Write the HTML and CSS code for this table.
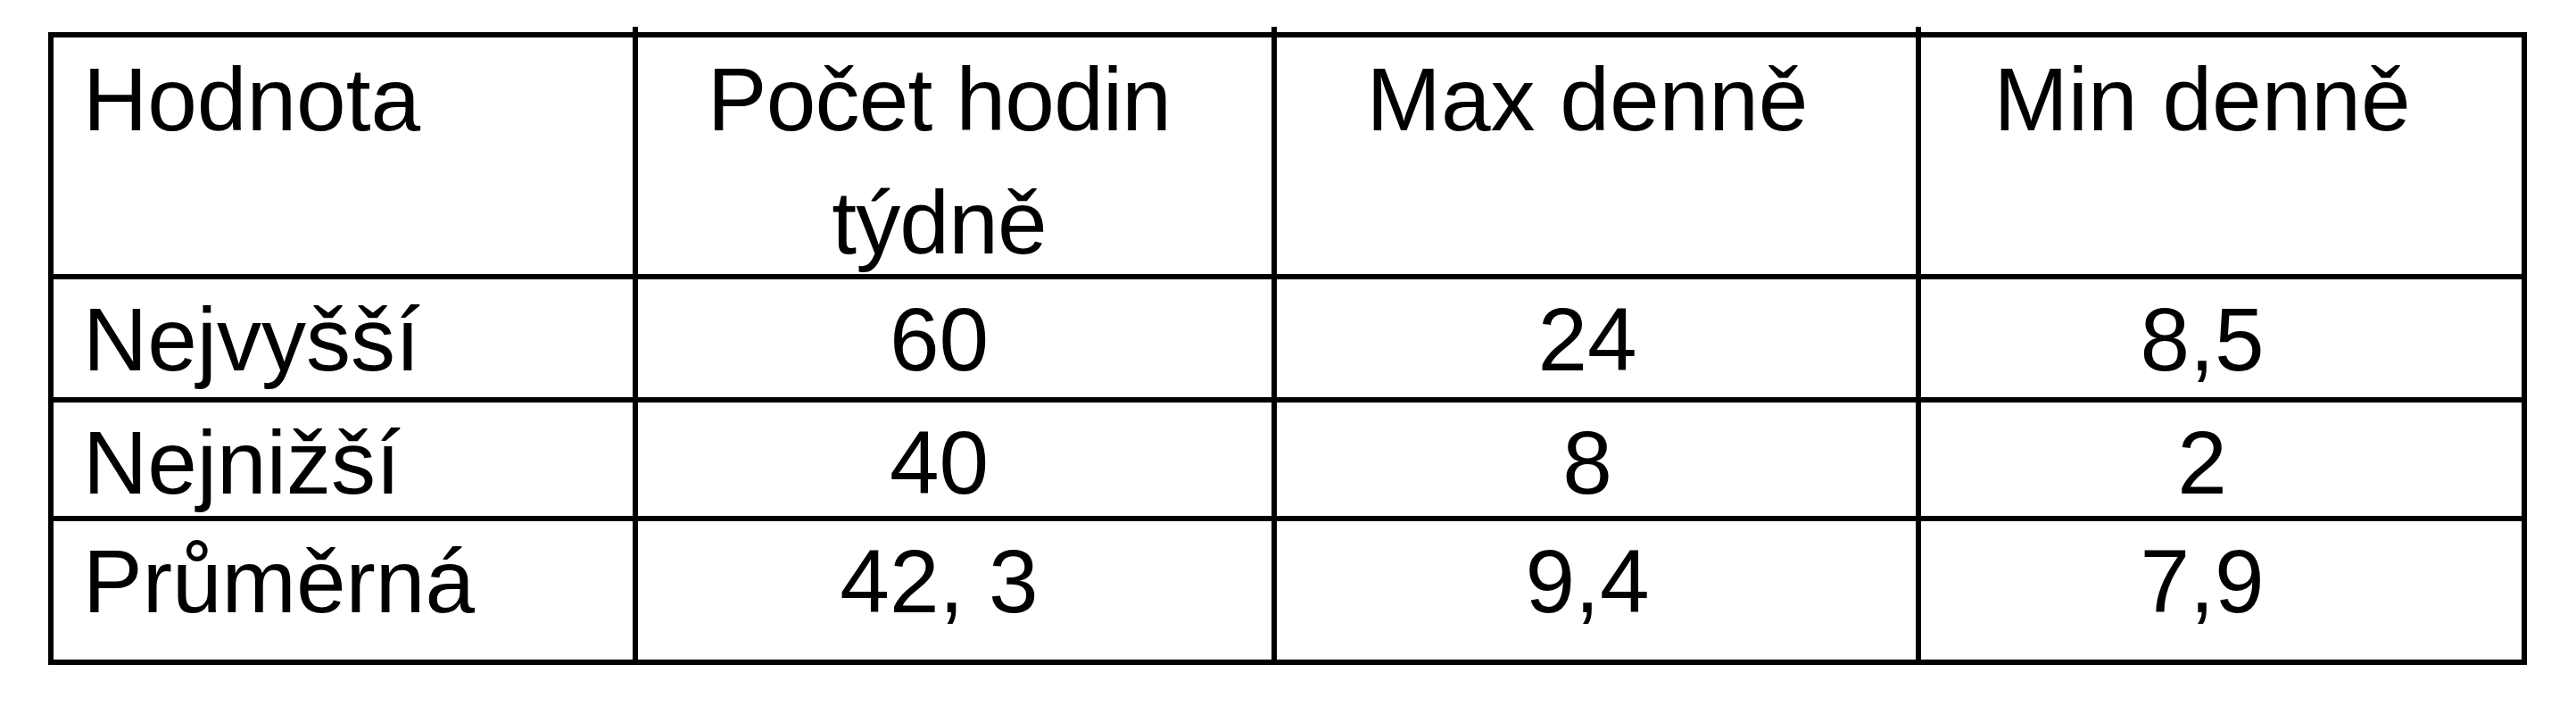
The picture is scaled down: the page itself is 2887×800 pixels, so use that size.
FILE: index.html
```html
<!DOCTYPE html>
<html lang="cs">
<head>
<meta charset="utf-8">
<title>Hodnota</title>
<link rel="stylesheet" href="styles.css">
</head>
<body>
<div class="table" role="table">
  <div class="row head" role="row">
    <div class="cell c1" role="columnheader">Hodnota</div>
    <div class="cell c2" role="columnheader">Počet hodin týdně</div>
    <div class="cell c3" role="columnheader">Max denně</div>
    <div class="cell c4" role="columnheader">Min denně</div>
  </div>
  <div class="row" role="row">
    <div class="cell c1" role="cell">Nejvyšší</div>
    <div class="cell c2" role="cell">60</div>
    <div class="cell c3" role="cell">24</div>
    <div class="cell c4" role="cell">8,5</div>
  </div>
  <div class="row" role="row">
    <div class="cell c1" role="cell">Nejnižší</div>
    <div class="cell c2" role="cell">40</div>
    <div class="cell c3" role="cell">8</div>
    <div class="cell c4" role="cell">2</div>
  </div>
  <div class="row last" role="row">
    <div class="cell c1" role="cell">Průměrná</div>
    <div class="cell c2" role="cell">42, 3</div>
    <div class="cell c3" role="cell">9,4</div>
    <div class="cell c4" role="cell">7,9</div>
  </div>
</div>
</body>
</html>
```

FILE: styles.css
```css
html, body {
  margin: 0;
  padding: 0;
  background: #ffffff;
}

body {
  font-family: "Liberation Sans", Arial, sans-serif;
  color: #000000;
}

.table {
  margin: 36px 0 0 54px;
  width: 2778px;
  box-sizing: border-box;
  display: grid;
  grid-template-columns: 655px 716px 722px 679px;
  grid-template-rows: 271px 138px 133px 161px;
  border-top: 6px solid #000;
  border-left: 6px solid #000;
}

.row {
  display: contents;
}

.cell {
  position: relative;
  box-sizing: border-box;
  border-right: 6px solid #000;
  border-bottom: 6px solid #000;
  font-size: 100px;
  line-height: 135px;
  white-space: normal;
}

.head .cell {
  line-height: 138px;
}

.c1 {
  text-align: left;
  padding-left: 33px;
}

.c2 {
  text-align: center;
  padding-right: 35px;
}

.head .c2 {
  letter-spacing: -0.8px;
}

.c3 {
  text-align: center;
  padding-right: 20px;
}

.c4 {
  text-align: center;
  padding-right: 43px;
}

/* inner vertical rules poke out past the outer frame */
.head .c1::before,
.head .c2::before,
.head .c3::before {
  content: "";
  position: absolute;
  right: -6px;
  top: -12px;
  width: 6px;
  height: 6px;
  background: #000;
}

.last .c1::after,
.last .c2::after,
.last .c3::after {
  content: "";
  position: absolute;
  right: -6px;
  bottom: -13px;
  width: 6px;
  height: 7px;
  background: #000;
}
```
